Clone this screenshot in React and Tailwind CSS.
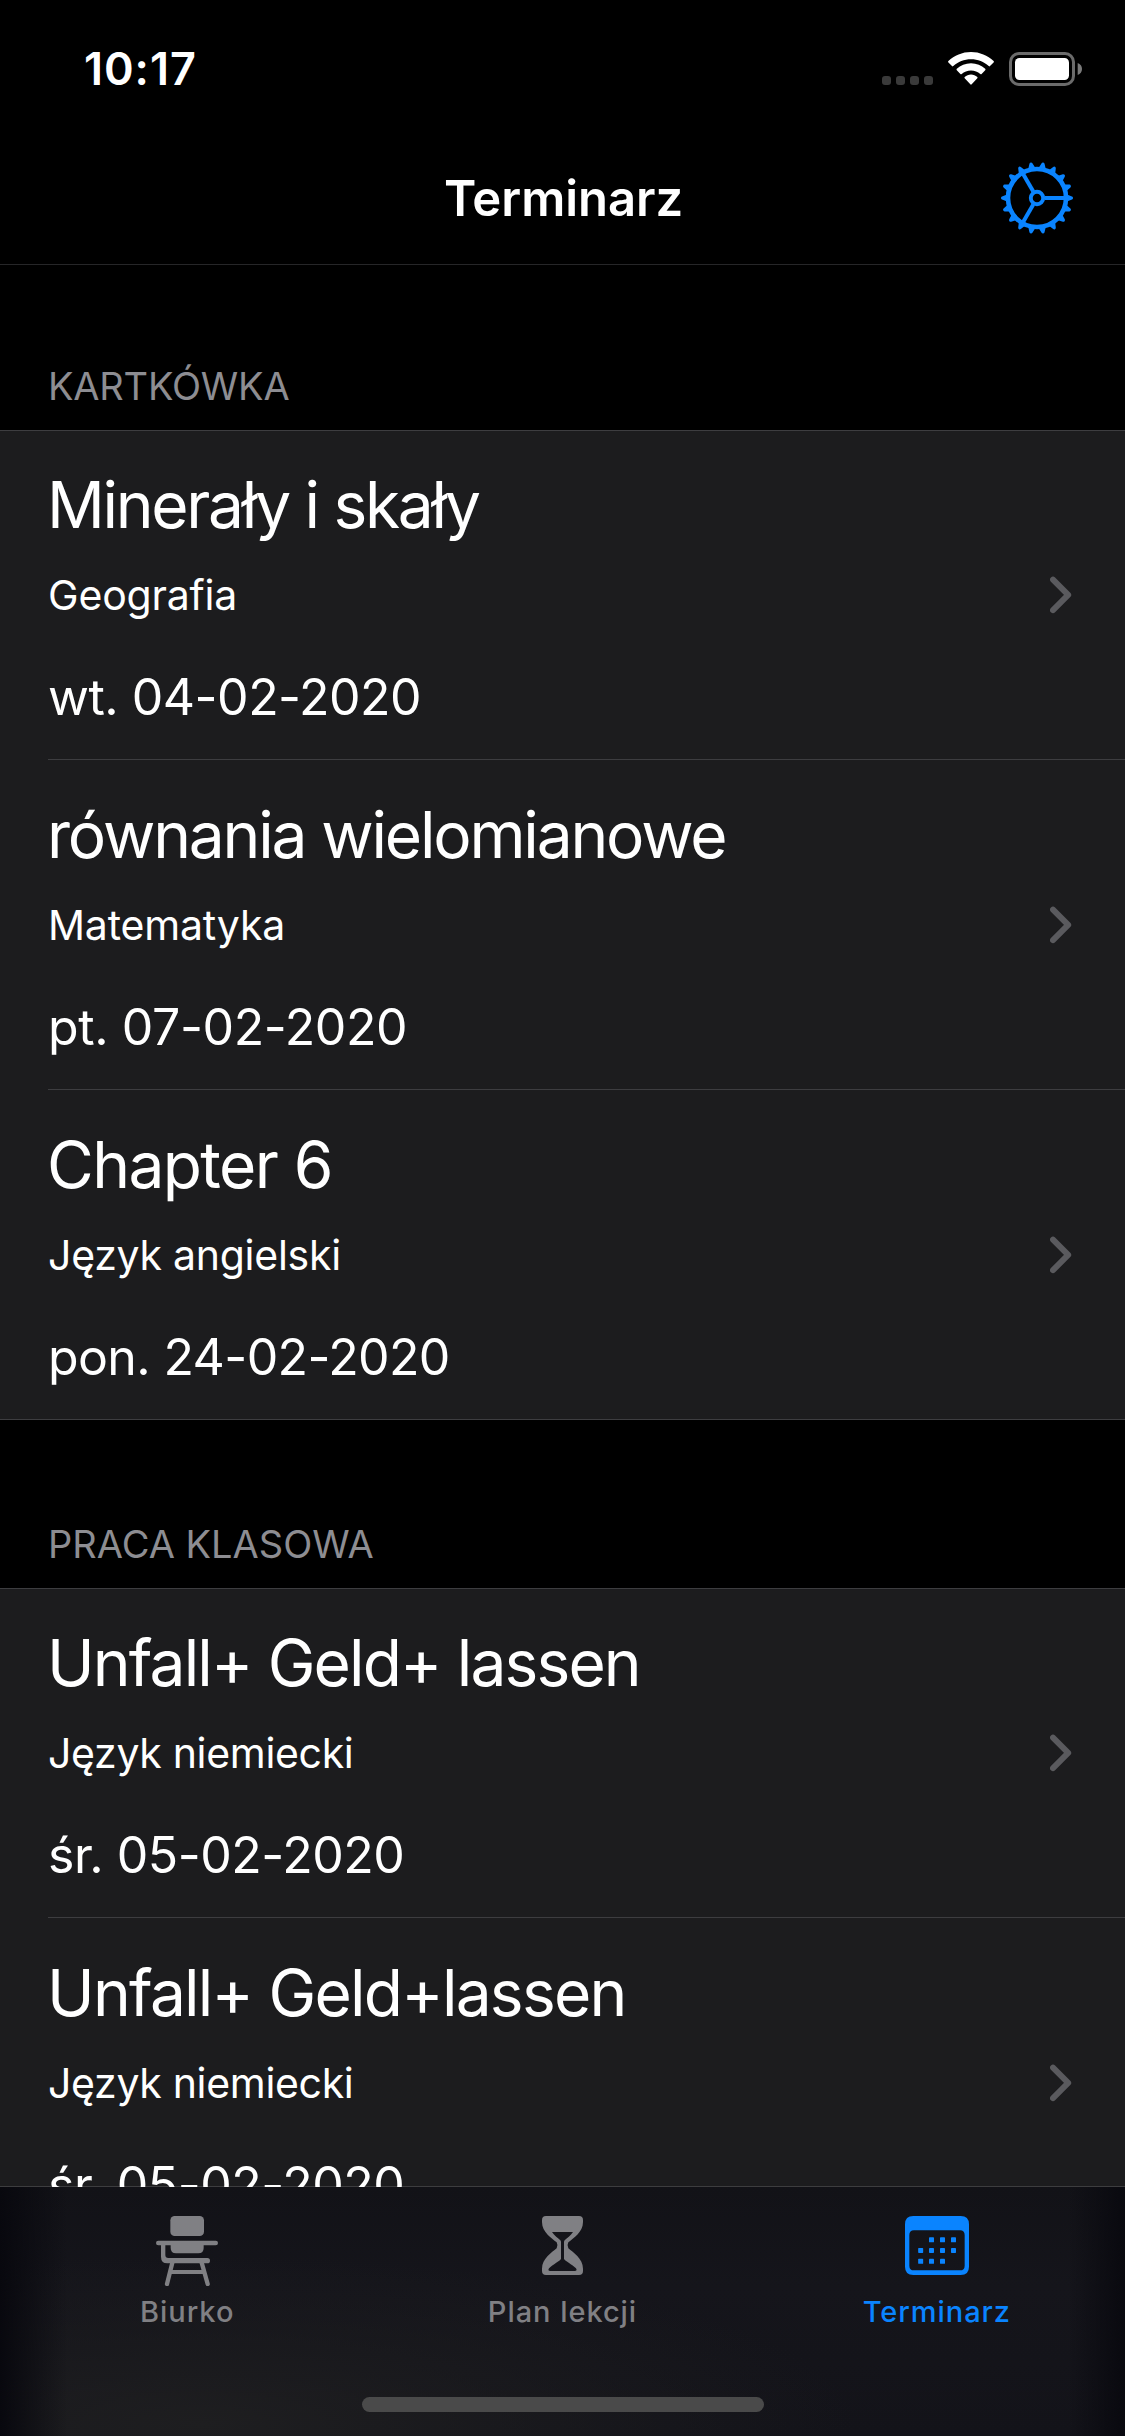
import React from "react";

const sections = [
  {
    name: "KARTKÓWKA",
    headerClass: "h-[165px]",
    tracking: "tracking-[-0.2px]",
    items: [
      { title: "Minerały i skały", subject: "Geografia", date: "wt. 04-02-2020", tt: "tracking-[-2.3px]", st: "tracking-[-0.18px]", dt: "tracking-[-0.5px]" },
      { title: "równania wielomianowe", subject: "Matematyka", date: "pt. 07-02-2020", tt: "tracking-[-2.16px]", st: "tracking-[-0.18px]", dt: "tracking-[-0.4px]" },
      { title: "Chapter 6", subject: "Język angielski", date: "pon. 24-02-2020", tt: "tracking-[-1.6px]", st: "tracking-[-0.27px]", dt: "tracking-[-0.62px]" },
    ],
  },
  {
    name: "PRACA KLASOWA",
    headerClass: "h-[168px]",
    tracking: "tracking-[0px]",
    items: [
      { title: "Unfall+ Geld+ lassen", subject: "Język niemiecki", date: "śr. 05-02-2020", tt: "tracking-[-1.84px]", st: "tracking-[-0.32px]", dt: "tracking-[-0.47px]" },
      { title: "Unfall+ Geld+lassen", subject: "Język niemiecki", date: "śr. 05-02-2020", tt: "tracking-[-1.74px]", st: "tracking-[-0.32px]", dt: "tracking-[-0.47px]" },
    ],
  },
];

function WifiIcon() {
  return (
    <svg width="46" height="33" viewBox="0 0 46 33" fill="#fff">
      <path d="M23 0C14.300 0 6.300 3.400 0.400 9.100Q-0.200 9.800 0.400 10.500L4 14.100Q4.600 14.700 5.300 14.100C10 9.700 16.200 7.200 23 7.200S36 9.700 40.700 14.100Q41.400 14.700 42 14.100L45.600 10.500Q46.200 9.800 45.600 9.100C39.700 3.400 31.700 0 23 0Z" />
      <path d="M23 11.200C17.500 11.200 12.500 13.300 8.800 16.800Q8.100 17.500 8.800 18.200L12.400 21.900Q13 22.500 13.700 21.900C16.200 19.700 19.400 18.400 23 18.400S29.800 19.700 32.300 21.900Q33 22.500 33.600 21.900L37.200 18.200Q37.900 17.500 37.200 16.800C33.500 13.300 28.500 11.200 23 11.200Z" />
      <path d="M23 22.600C20.600 22.600 18.400 23.500 16.700 25Q16.100 25.700 16.700 26.300L22.300 32.300Q23 33 23.700 32.300L29.300 26.300Q29.900 25.700 29.300 25C27.600 23.500 25.400 22.600 23 22.600Z" />
    </svg>
  );
}

function BatteryIcon() {
  return (
    <svg width="73" height="34" viewBox="0 0 73 34">
      <rect x="1.500" y="1.500" width="63" height="31" rx="8.500" fill="none" stroke="#6b6b6b" strokeWidth="3" />
      <rect x="6" y="6" width="54" height="22" rx="4.500" fill="#fff" />
      <path d="M68.700 11C71.400 12 73 14.300 73 17S71.400 22 68.700 23Z" fill="#7a7a7a" />
    </svg>
  );
}

function GearIcon() {
  const teeth = Array.from({ length: 18 }, (_, i) => i * 20);
  return (
    <svg width="72" height="72" viewBox="-36 -36 72 72" fill="none" stroke="#0a84ff">
      <circle r="29" strokeWidth="4.600" />
      {teeth.map((a) => (
        <path key={a} d="M30 -3.900L31.200 -3.100L35 -1.500Q36 -1.100 36 0Q36 1.100 35 1.500L31.200 3.100L30 3.900Z" fill="#0a84ff" stroke="none" transform={`rotate(${a})`} />
      ))}
      <circle r="6.200" strokeWidth="3.900" />
      {[0, 120, 240].map((a) => (
        <path key={a} d="M7.500 0H28" strokeWidth="4" transform={`rotate(${a})`} />
      ))}
    </svg>
  );
}

function Chevron() {
  return (
    <svg width="22" height="38" viewBox="0 0 22 38" fill="none" stroke="#5a5a5e" strokeWidth="5.900" strokeLinecap="round" strokeLinejoin="round">
      <path d="M3 3.600L18.200 18.900L3 34.200" />
    </svg>
  );
}

function DeskIcon() {
  return (
    <svg width="62" height="70.400" viewBox="138 78 186 211" fill="#808084">
      <rect x="181" y="78" width="101" height="60" rx="13" />
      <rect x="138" y="152" width="186" height="14" rx="7" />
      <path d="M182 164H281V174Q281 190 265 190H198Q182 190 182 174Z" />
      <path d="M153 164H166V195Q166 204 175 204H292Q300 204 300 212T292 220H172Q153 220 153 200Z" />
      <path d="M187 218L171 282M275 218L293 282" stroke="#808084" strokeWidth="13" strokeLinecap="round" />
      <path d="M180 246H284" stroke="#808084" strokeWidth="12" />
    </svg>
  );
}

function HourglassIcon() {
  return (
    <svg width="41" height="59" viewBox="186 78 123 177" fill="#808084">
      <path
        fillRule="evenodd"
        d="M198 78H297Q309 78 309 90V96C309 127 280 144 265 157Q260 166 265 175C280 188 309 206 309 236V243Q309 255 297 255H198Q186 255 186 243V236C186 206 215 188 230 175Q235 166 230 157C215 144 186 127 186 96V90Q186 78 198 78Z
        M216 126C223 137 234 144 241 151Q243 153 243 157V206C243 211 217 224 207 235Q202 243 211 243H284Q293 243 288 235C278 224 252 211 252 206V157Q252 153 254 151C261 144 272 137 279 126Z"
      />
    </svg>
  );
}

function CalendarIcon() {
  const dots = [
    [237, 142], [270, 142], [303, 142],
    [204.5, 174], [237, 174], [270, 174], [303, 174],
    [204.5, 206.5], [237, 206.5], [270, 206.5],
  ];
  return (
    <svg width="64" height="59" viewBox="165 78 192 177" fill="#0a84ff">
      <path
        fillRule="evenodd"
        d="M190 78H332Q357 78 357 103V230Q357 255 332 255H190Q165 255 165 230V103Q165 78 190 78Z
        M192 121Q178 121 178 135V227Q178 241 192 241H330Q344 241 344 227V135Q344 121 330 121Z"
      />
      {dots.map(([x, y]) => (
        <rect key={`${x}-${y}`} x={x} y={y} width="15" height="15" rx="2" />
      ))}
    </svg>
  );
}

function Row({ item, first, last }) {
  return (
    <li
      className={`flex h-[330px] bg-[#1c1c1e] ${first ? "border-t border-[#3d3d40]" : ""} ${last ? "border-b border-b-[#3d3d40]" : "pl-12"}`}
    >
      <div className={`flex flex-1 items-center justify-between pr-[53px] ${last ? "pl-12" : "border-b border-[#3d3d40]"}`}>
        <div className={`self-start whitespace-nowrap ${first ? "pt-[34px]" : "pt-[35px]"}`}>
          <h3 className={`-ml-px text-[64px] leading-[80px] ${item.tt}`}>{item.title}</h3>
          <p className={`mt-[25px] text-[41px] leading-[50px] ${item.st}`}>{item.subject}</p>
          <p className={`mt-[47px] text-[50px] leading-[60px] ${item.dt}`}>{item.date}</p>
        </div>
        <Chevron />
      </div>
    </li>
  );
}

function Tab({ icon, label, className }) {
  return (
    <button className={`flex flex-1 flex-col items-center text-[29px] leading-9 font-[450] ${className}`}>
      <span className="h-[78px]">{icon}</span>
      <span>{label}</span>
    </button>
  );
}

export default function App() {
  return (
    <div className="flex h-[2436px] w-[1125px] flex-col overflow-hidden bg-black font-['Inter','Liberation_Sans',sans-serif] text-white">
      <header className="shrink-0 border-b border-[#262628]">
        <div className="flex h-[132px] items-start justify-between pr-[43px] pl-[84px]">
          <span className="mt-[42px] text-[45px] leading-[54px] font-semibold tracking-[0.95px]">10:17</span>
          <div className="mt-[52px] flex">
            <div className="mt-6 mr-[15px] flex gap-[5px]">
              <span className="size-[9px] rounded-[3px] bg-[#3a3a3a]" />
              <span className="size-[9px] rounded-[3px] bg-[#3a3a3a]" />
              <span className="size-[9px] rounded-[3px] bg-[#3a3a3a]" />
              <span className="size-[9px] rounded-[3px] bg-[#3a3a3a]" />
            </div>
            <div className="mr-[15px]">
              <WifiIcon />
            </div>
            <BatteryIcon />
          </div>
        </div>
        <div className="grid h-[132px] grid-cols-[1fr_auto_1fr] items-center pr-[52px] pl-[52px]">
          <span />
          <h1 className="pt-0.5 pl-0.5 text-[49px] leading-[60px] font-semibold tracking-[-0.05px]">Terminarz</h1>
          <div className="justify-self-end">
            <GearIcon />
          </div>
        </div>
      </header>

      <main className="min-h-0 flex-1 overflow-hidden">
        {sections.map((s) => (
          <section key={s.name}>
            <h2 className={`flex items-end pb-[21px] pl-12 text-[38px] leading-[46px] text-[#8d8d92] ${s.headerClass} ${s.tracking}`}>
              {s.name}
            </h2>
            <ul>
              {s.items.map((item, i) => (
                <Row key={item.title} item={item} first={i === 0} last={i === s.items.length - 1} />
              ))}
            </ul>
          </section>
        ))}
      </main>

      <nav className="relative -mt-px flex h-[250px] shrink-0 flex-col items-center border-t border-white/15 bg-[#14141a] bg-[linear-gradient(90deg,#08080e_0%,transparent_6%,transparent_95%,#09090f_100%),radial-gradient(ellipse_at_18%_95%,#1e1e20_0%,transparent_50%),linear-gradient(180deg,#121217_0%,#15151b_40%,#131319_100%)] bg-clip-padding pt-[29px]">
        <div className="flex w-full">
          <Tab icon={<DeskIcon />} label="Biurko" className="pr-px tracking-[1px] text-[#808084]" />
          <Tab icon={<HourglassIcon />} label="Plan lekcji" className="tracking-[0.95px] text-[#808084]" />
          <Tab icon={<CalendarIcon />} label="Terminarz" className="pr-px tracking-[0.95px] text-[#0a84ff]" />
        </div>
        <div className="mt-[67px] h-[15px] w-[402px] rounded-full bg-[#4a4a4a]" />
      </nav>
    </div>
  );
}
